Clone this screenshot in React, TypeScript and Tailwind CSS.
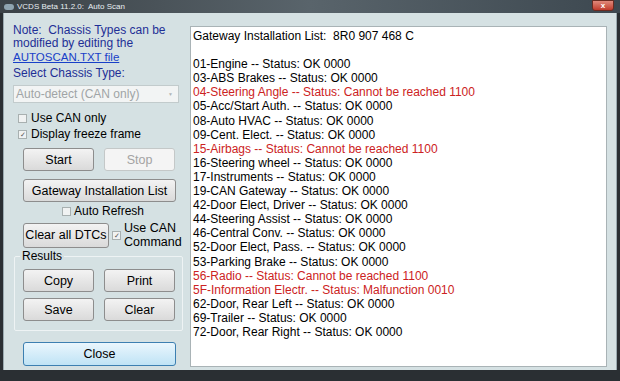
import React from 'react';

const lines: { t: string; red?: boolean }[] = [
  { t: '01-Engine -- Status: OK 0000' },
  { t: '03-ABS Brakes -- Status: OK 0000' },
  { t: '04-Steering Angle -- Status: Cannot be reached 1100', red: true },
  { t: '05-Acc/Start Auth. -- Status: OK 0000' },
  { t: '08-Auto HVAC -- Status: OK 0000' },
  { t: '09-Cent. Elect. -- Status: OK 0000' },
  { t: '15-Airbags -- Status: Cannot be reached 1100', red: true },
  { t: '16-Steering wheel -- Status: OK 0000' },
  { t: '17-Instruments -- Status: OK 0000' },
  { t: '19-CAN Gateway -- Status: OK 0000' },
  { t: '42-Door Elect, Driver -- Status: OK 0000' },
  { t: '44-Steering Assist -- Status: OK 0000' },
  { t: '46-Central Conv. -- Status: OK 0000' },
  { t: '52-Door Elect, Pass. -- Status: OK 0000' },
  { t: '53-Parking Brake -- Status: OK 0000' },
  { t: '56-Radio -- Status: Cannot be reached 1100', red: true },
  { t: '5F-Information Electr. -- Status: Malfunction 0010', red: true },
  { t: '62-Door, Rear Left -- Status: OK 0000' },
  { t: '69-Trailer -- Status: OK 0000' },
  { t: '72-Door, Rear Right -- Status: OK 0000' },
];

function Btn({ children, w, disabled }: { children: React.ReactNode; w: string; disabled?: boolean }) {
  return (
    <div
      className={`${w} h-[23px] flex items-center justify-center rounded-[3px] border text-[12.5px] ${
        disabled
          ? 'border-[#c4c8c8] bg-[#f4f4f4] text-[#a3a3a3]'
          : 'border-[#8d8d8d] bg-gradient-to-b from-[#f3f3f3] to-[#dadada] text-black'
      }`}
    >
      {children}
    </div>
  );
}

function Check({ checked }: { checked?: boolean }) {
  return (
    <span className="w-[9px] h-[9px] border border-[#a8b0b0] bg-[#f0f2f2] flex items-center justify-center text-[7px] leading-none text-[#555]">
      {checked ? '✓' : ''}
    </span>
  );
}

export default function App() {
  return (
    <div
      className="w-[620px] h-[381px] bg-[#2a2f33] flex flex-col overflow-hidden"
      style={{ fontFamily: '"Liberation Sans", Arial, sans-serif' }}
    >
      {/* title bar */}
      <div className="h-[13px] flex items-center bg-gradient-to-r from-[#3b4247] via-[#59646b] to-[#3d4850] relative">
        <span className="w-[10px] h-[6px] ml-[4px] bg-[#8fa4b0] rounded-sm" />
        <span className="ml-[3px] text-[8px] leading-none text-[#e8eef2]">VCDS Beta 11.2.0:&nbsp; Auto Scan</span>
        <div className="absolute right-[6px] top-0 w-[22px] h-[11px] rounded-b-[3px] bg-gradient-to-b from-[#e0887a] to-[#c0392b] border border-[#6b2a20] flex items-center justify-center text-[8px] text-white font-bold leading-none">
          x
        </div>
      </div>
      {/* window body */}
      <div className="flex-1 mx-[3px] mb-[11px] bg-[#d5e1e3] flex border-x border-[#9aaab0]">
        <div className="w-[186px] pl-[9px] pt-[11px] flex flex-col text-[12px] leading-[14px]">
          <div className="text-[#1e2f96] leading-[13px]">
            Note:&nbsp; Chassis Types can be
            <br />
            modified by editing the
          </div>
          <div className="text-[#1840c8] underline text-[11.5px] leading-[14px]">AUTOSCAN.TXT file</div>
          <div className="text-[#1e2f96] mt-[2px]">Select Chassis Type:</div>
          <div className="mt-[5px] w-[166px] h-[18px] border border-[#c2cbcc] bg-[#f2f4f4] flex items-center justify-between px-[2px] text-[#a0a4a6]">
            <span>Auto-detect (CAN only)</span>
            <span className="text-[5px] text-[#b0b4b6] mr-[3px]">▼</span>
          </div>
          <div className="mt-[8px] flex items-center gap-[4px] pl-[5px]">
            <Check />
            <span>Use CAN only</span>
          </div>
          <div className="mt-[2px] flex items-center gap-[4px] pl-[5px]">
            <Check checked />
            <span>Display freeze frame</span>
          </div>
          <div className="mt-[7px] ml-[10px] flex gap-[10px]">
            <Btn w="w-[71px]">Start</Btn>
            <Btn w="w-[71px]" disabled>
              Stop
            </Btn>
          </div>
          <div className="mt-[8px] ml-[10px]">
            <Btn w="w-[153px]">Gateway Installation List</Btn>
          </div>
          <div className="mt-[2px] ml-[49px] flex items-center gap-[3px]">
            <Check />
            <span>Auto Refresh</span>
          </div>
          <div className="mt-[3px] ml-[10px] flex items-center gap-[3px]">
            <div className="w-[86px] h-[25px] flex items-center justify-center rounded-[3px] border border-[#8d8d8d] bg-gradient-to-b from-[#f3f3f3] to-[#dadada] text-[12.5px]">
              Clear all DTCs
            </div>
            <Check checked />
            <span className="leading-[14px] text-[12.5px]">
              Use CAN
              <br />
              Command
            </span>
          </div>
          <div className="mt-[7px] ml-[1px] w-[169px] h-[75px] border border-[#eef3f4] rounded-[2px] relative pt-[12px] pl-[8px]">
            <span className="absolute -top-[8px] left-[5px] bg-[#d5e1e3] px-[2px]">Results</span>
            <div className="flex gap-[10px]">
              <Btn w="w-[71px]">Copy</Btn>
              <Btn w="w-[71px]">Print</Btn>
            </div>
            <div className="flex gap-[10px] mt-[6px]">
              <Btn w="w-[71px]">Save</Btn>
              <Btn w="w-[71px]">Clear</Btn>
            </div>
          </div>
          <div className="mt-[11px] ml-[10px] w-[153px] h-[24px] flex items-center justify-center rounded-[3px] border border-[#3c7fb1] bg-gradient-to-b from-[#eaf6fd] to-[#bfe3f5] text-[12.5px]">
            Close
          </div>
        </div>
        <div className="mt-[13px] mb-[3px] w-[417px] border border-[#a9b3b6] bg-white px-[2px] pt-[2px] text-[12px] leading-[14.1px] text-black">
          <div>Gateway Installation List:&nbsp; 8R0 907 468 C</div>
          <div className="h-[14.1px]" />
          {lines.map((l, i) => (
            <div key={i} className={l.red ? 'text-[#cc2222]' : ''}>
              {l.t}
            </div>
          ))}
        </div>
      </div>
    </div>
  );
}
